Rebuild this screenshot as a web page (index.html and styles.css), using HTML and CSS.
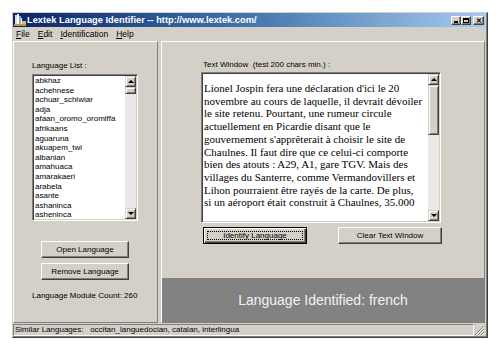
FILE: index.html
```html
<!DOCTYPE html>
<html>
    <head>
        <title>Lextek Language Identifier</title>
        <link rel="stylesheet" href="styles.css">
    </head>
    <body>
        <div class="window">
            <div class="titlebar">
                <svg class="appIcon" width="12" height="12" viewBox="0 0 12 12">
                    <rect x="1" y="1" width="2" height="9" fill="#dcdcdc"/>
                    <rect x="3" y="0" width="2" height="10" fill="#ffffff"/>
                    <rect x="5" y="2" width="2" height="8" fill="#9aa4c8"/>
                    <rect x="7" y="4" width="1" height="6" fill="#ffffff"/>
                    <rect x="0" y="10" width="12" height="2" fill="#b8a040"/>
                    <rect x="8" y="7" width="4" height="3" fill="#d8c060"/>
                </svg>
                <span class="title">Lextek Language Identifier -- http://www.lextek.com/</span>
                <div class="captionBtns">
                    <span class="capBtn"><span class="minGlyph"></span></span>
                    <span class="capBtn"><span class="maxGlyph"></span></span>
                    <span class="capBtn closeBtn">&#x2715;</span>
                </div>
            </div>
            <div class="menubar">
                <span class="menuItem"><u>F</u>ile</span>
                <span class="menuItem"><u>E</u>dit</span>
                <span class="menuItem"><u>I</u>dentification</span>
                <span class="menuItem"><u>H</u>elp</span>
            </div>
            <div class="main">
                <div class="panel leftPanel">
                    <div class="labelInfo">Language List :</div>
                    <div class="listbox">
                        <div class="items">
                            <div>abkhaz</div>
                            <div>achehnese</div>
                            <div>achuar_schiwiar</div>
                            <div>adja</div>
                            <div>afaan_oromo_oromiffa</div>
                            <div>afrikaans</div>
                            <div>aguaruna</div>
                            <div>akuapem_twi</div>
                            <div>albanian</div>
                            <div>amahuaca</div>
                            <div>amarakaeri</div>
                            <div>arabela</div>
                            <div>asante</div>
                            <div>ashaninca</div>
                            <div>asheninca</div>
                        </div>
                        <div class="vscroll">
                            <span class="arrowBtn"><span class="upArrow"></span></span>
                            <span class="thumb smallThumb"></span>
                            <span class="track"></span>
                            <span class="arrowBtn"><span class="downArrow"></span></span>
                        </div>
                    </div>
                    <div class="button leftButton firstButton">Open Language</div>
                    <div class="button leftButton">Remove Language</div>
                    <div class="count">Language Module Count: 260</div>
                </div>
                <div class="panel rightPanel">
                    <div class="upper">
                        <div class="labelInfo textLabel">Text Window&nbsp; (test 200 chars min.) :</div>
                        <div class="textbox">
                            <div class="textLines">
                                <div>Lionel Jospin fera une déclaration d'ici le 20</div>
                                <div>novembre au cours de laquelle, il devrait dévoiler</div>
                                <div>le site retenu. Pourtant, une rumeur circule</div>
                                <div>actuellement en Picardie disant que le</div>
                                <div>gouvernement s'apprêterait à choisir le site de</div>
                                <div>Chaulnes. Il faut dire que ce celui-ci comporte</div>
                                <div>bien des atouts : A29, A1, gare TGV. Mais des</div>
                                <div>villages du Santerre, comme Vermandovillers et</div>
                                <div>Lihon pourraient être rayés de la carte. De plus,</div>
                                <div>si un aéroport était construit à Chaulnes, 35.000</div>
                            </div>
                            <div class="vscroll textScroll">
                                <span class="arrowBtn"><span class="upArrow"></span></span>
                                <span class="thumb bigThumb"></span>
                                <span class="track"></span>
                                <span class="arrowBtn"><span class="downArrow"></span></span>
                            </div>
                        </div>
                        <div class="buttonRow">
                            <div class="button wideButton focused"><span class="focusRing">Identify Language</span></div>
                            <div class="button wideButton">Clear Text Window</div>
                        </div>
                    </div>
                    <div class="result">Language Identified: french</div>
                </div>
            </div>
            <div class="statusbar">
                <div class="statusField">Similar Languages:&nbsp;&nbsp;&nbsp;<span class="similar">occitan_languedocian, catalan, interlingua</span></div>
                <svg class="grip" width="11" height="12" viewBox="0 0 11 12">
                    <path d="M10 2 L1 11 M10 5 L4 11 M10 8 L7 11" stroke="#808080" stroke-width="1"/>
                    <path d="M10 3 L2 11 M10 6 L5 11 M10 9 L8 11" stroke="#ffffff" stroke-width="1"/>
                </svg>
            </div>
        </div>
    </body>
</html>
```

FILE: styles.css
```css
* {
    box-sizing: border-box;
}

body {
    margin: 0;
    padding: 12px;
    background-color: white;
    font-family: "Liberation Sans", Arial, sans-serif;
    font-size: 8px;
    color: black;
}

.window {
    width: 476px;
    height: 326px;
    background-color: #d4d0c8;
    border-top: 1px solid #d4d0c8;
    border-left: 1px solid #d4d0c8;
    border-right: 1px solid #404040;
    border-bottom: 1px solid #404040;
    box-shadow: inset -1px -1px #808080;
    padding: 0 2px 1px 0;
    display: flex;
    flex-direction: column;
}

.titlebar {
    height: 14px;
    background: linear-gradient(to right, #0a246a, #3a6ea5 45%, #a6caf0);
    display: flex;
    align-items: center;
    padding-left: 1px;
}

.appIcon {
    flex-shrink: 0;
}

.title {
    margin-left: 1px;
    color: white;
    font-weight: bold;
    font-size: 9.3px;
    white-space: nowrap;
    flex: 1;
}

.captionBtns {
    display: flex;
    margin-right: 1px;
}

.capBtn {
    width: 10px;
    height: 9px;
    background-color: #d4d0c8;
    border: 1px solid;
    border-color: #fff #404040 #404040 #fff;
    box-shadow: inset -1px -1px #808080;
    display: flex;
    align-items: center;
    justify-content: center;
}

.closeBtn {
    width: 11px;
    margin-left: 2px;
    font-size: 7px;
    font-weight: bold;
    line-height: 7px;
}

.minGlyph {
    width: 4px;
    height: 2px;
    background-color: black;
    margin-top: 4px;
    margin-right: 1px;
}

.maxGlyph {
    width: 6px;
    height: 5px;
    border: 1px solid black;
    border-top-width: 2px;
}

.menubar {
    height: 14px;
    display: flex;
    align-items: center;
    padding-left: 3px;
    font-size: 8.5px;
}

.menuItem {
    margin-right: 8px;
}

.main {
    height: 282px;
    display: flex;
    gap: 3px;
}

.panel {
    border: 1px solid;
    border-color: #fff #808080 #808080 #fff;
}

.leftPanel {
    width: 145px;
    padding: 19px 0 0 18px;
}

.labelInfo {
    line-height: 10px;
    white-space: nowrap;
}

.listbox {
    width: 106px;
    height: 147px;
    margin-top: 3px;
    background-color: white;
    border: 1px solid;
    border-color: #808080 #fff #fff #808080;
    box-shadow: inset 1px 1px #404040, inset -1px -1px #d4d0c8;
    padding: 1px;
    display: flex;
}

.items {
    flex: 1;
    padding-left: 1px;
    line-height: 9.6px;
    overflow: hidden;
    white-space: nowrap;
}

.vscroll {
    width: 11px;
    display: flex;
    flex-direction: column;
}

.arrowBtn {
    height: 11px;
    background-color: #d4d0c8;
    border: 1px solid;
    border-color: #d4d0c8 #404040 #404040 #d4d0c8;
    box-shadow: inset 1px 1px #fff, inset -1px -1px #808080;
    display: flex;
    align-items: center;
    justify-content: center;
}

.upArrow {
    border-left: 3px solid transparent;
    border-right: 3px solid transparent;
    border-bottom: 3px solid black;
}

.downArrow {
    border-left: 3px solid transparent;
    border-right: 3px solid transparent;
    border-top: 3px solid black;
}

.thumb {
    background-color: #d4d0c8;
    border: 1px solid;
    border-color: #d4d0c8 #404040 #404040 #d4d0c8;
    box-shadow: inset 1px 1px #fff, inset -1px -1px #808080;
}

.smallThumb {
    height: 7px;
}

.bigThumb {
    height: 50px;
}

.track {
    flex: 1;
    background-color: #ebe9e5;
}

.button {
    height: 17px;
    background-color: #d4d0c8;
    border: 1px solid;
    border-color: #fff #404040 #404040 #fff;
    box-shadow: inset -1px -1px #808080;
    display: flex;
    align-items: center;
    justify-content: center;
    white-space: nowrap;
}

.leftButton {
    width: 88px;
    margin-left: 9px;
    margin-top: 5px;
}

.firstButton {
    margin-top: 20px;
}

.count {
    margin-top: 11px;
    line-height: 10px;
    white-space: nowrap;
}

.rightPanel {
    flex: 1;
    display: flex;
    flex-direction: column;
}

.upper {
    flex: 1;
    padding: 18px 0 0 39px;
}

.textLabel {
    margin-left: 2px;
}

.textbox {
    width: 240px;
    height: 151px;
    margin-top: 2px;
    background-color: white;
    border: 1px solid;
    border-color: #808080 #fff #fff #808080;
    box-shadow: inset 1px 1px #404040, inset -1px -1px #d4d0c8;
    padding: 1px;
    display: flex;
}

.textLines {
    flex: 1;
    padding: 8px 0 0 1px;
    font-family: "Liberation Serif", "Times New Roman", serif;
    font-size: 11px;
    line-height: 12.7px;
    white-space: nowrap;
    overflow: hidden;
}

.buttonRow {
    display: flex;
    gap: 31px;
    margin: 4px 0 0 2px;
}

.wideButton {
    width: 104px;
}

.focused {
    border-color: black;
    box-shadow: inset 1px 1px #fff, inset -1px -1px #404040, inset -2px -2px #808080;
    padding: 3px;
}

.focusRing {
    flex: 1;
    align-self: stretch;
    border: 1px dotted black;
    display: flex;
    align-items: center;
    justify-content: center;
}

.result {
    height: 44px;
    background-color: #828282;
    color: #f2f2f2;
    font-size: 14px;
    display: flex;
    align-items: center;
    justify-content: center;
}

.statusbar {
    height: 13px;
    display: flex;
    align-items: flex-end;
}

.statusField {
    flex: 1;
    height: 12px;
    border: 1px solid;
    border-color: #808080 #fff #fff #808080;
    padding-left: 1px;
    line-height: 10px;
    white-space: nowrap;
}

.grip {
    flex-shrink: 0;
}
```
